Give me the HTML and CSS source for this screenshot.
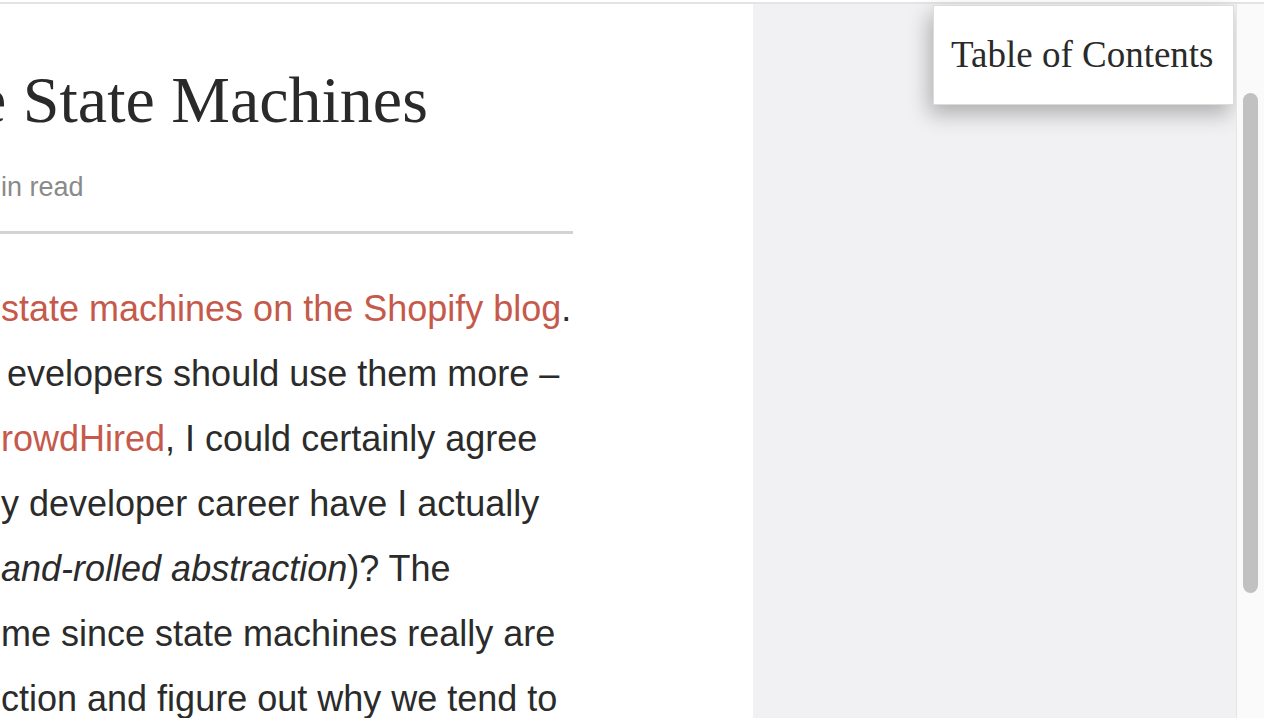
FILE: index.html
```html
<!DOCTYPE html>
<html lang="en">
<head>
<meta charset="utf-8">
<title>State Machines</title>
<link rel="stylesheet" href="styles.css">
</head>
<body>
<div class="topline"></div>
<div class="page">
  <main class="main">
    <article class="article">
      <h1 class="title">e State Machines</h1>
      <div class="meta">in read</div>
      <hr class="rule">
      <div class="body">
        <p class="line"><a href="#">state machines on the Shopify blog</a>.</p>
        <p class="line indent">evelopers should use them more –</p>
        <p class="line"><a href="#">rowdHired</a>, I could certainly agree</p>
        <p class="line">y developer career have I actually</p>
        <p class="line"><em>and-rolled abstraction</em>)? The</p>
        <p class="line">me since state machines really are</p>
        <p class="line">ction and figure out why we tend to</p>
      </div>
    </article>
  </main>
  <aside class="aside">
    <div class="toc">Table of Contents</div>
  </aside>
  <div class="scrollbar">
    <div class="thumb"></div>
  </div>
</div>
</body>
</html>
```

FILE: styles.css
```css
html, body {
  margin: 0;
  padding: 0;
  height: 100%;
  overflow: hidden;
  background: #ffffff;
}

.topline {
  height: 2px;
  margin-top: 2px;
  background: #e4e4e4;
}

.page {
  display: flex;
  height: 714px;
}

.main {
  width: 753px;
  flex: none;
  background: #ffffff;
  overflow: hidden;
}

.article {
  width: 573px;
  padding-top: 56px;
}

.title {
  margin: 0 0 0 -23px;
  font-family: "Liberation Serif", "Times New Roman", serif;
  font-weight: 400;
  font-size: 66px;
  line-height: 80px;
  color: #2a2a2a;
  white-space: nowrap;
}

.meta {
  margin-top: 32px;
  font-family: "Liberation Sans", Arial, sans-serif;
  font-size: 27px;
  line-height: 30px;
  color: #8a8a8a;
  padding-left: 1px;
}

.rule {
  margin: 29px 0 0 0;
  border: 0;
  height: 3px;
  background: #d3d3d3;
}

.body {
  margin-top: 42px;
  font-family: "Liberation Sans", Arial, sans-serif;
  font-size: 36px;
  line-height: 65px;
  color: #2b2b2b;
}

.line {
  margin: 0;
  white-space: nowrap;
  padding-left: 1px;
}

.line.indent {
  padding-left: 7px;
}

.line a {
  color: #c55a4b;
  text-decoration: none;
}

.line em {
  font-style: italic;
}

.aside {
  flex: 1;
  background: #f1f1f3;
  display: flex;
  justify-content: flex-end;
  align-items: flex-start;
  padding: 1px 2px 0 0;
}

.toc {
  width: 282px;
  height: 98px;
  padding-left: 17px;
  background: #ffffff;
  border: 1px solid #dcdcdc;
  box-shadow: -4px 9px 20px rgba(0, 0, 0, 0.28);
  font-family: "Liberation Serif", "Times New Roman", serif;
  font-size: 37px;
  line-height: 98px;
  color: #2a2a2a;
  white-space: nowrap;
}

.scrollbar {
  width: 28px;
  flex: none;
  background: #fafafa;
  border-left: 1px solid #e6e6e6;
  padding: 89px 0 0 6px;
  box-sizing: border-box;
}

.thumb {
  width: 15px;
  height: 500px;
  border-radius: 8px;
  background: #c1c1c1;
}
```
